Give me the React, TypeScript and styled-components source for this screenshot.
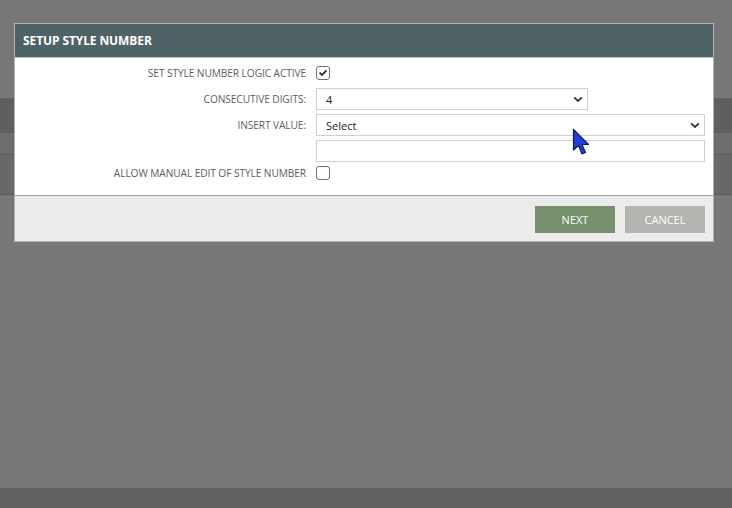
import styled, { createGlobalStyle } from 'styled-components';

const GlobalStyle = createGlobalStyle`
  * { box-sizing: border-box; }
  html, body { margin: 0; padding: 0; }
  body {
    width: 732px;
    height: 508px;
    overflow: hidden;
    font-family: 'Open Sans', 'Liberation Sans', sans-serif;
    background: #777777;
  }
`;

const rows = [
  { label: 'SET STYLE NUMBER LOGIC ACTIVE', kind: 'check', checked: true },
  { label: 'CONSECUTIVE DIGITS:', kind: 'select', value: '4', width: 272 },
  { label: 'INSERT VALUE:', kind: 'select', value: 'Select' },
  { label: '', kind: 'input' },
  { label: 'ALLOW MANUAL EDIT OF STYLE NUMBER', kind: 'check', checked: false },
];

const Chevron = () => (
  <svg width="10" height="7" viewBox="0 0 10 7">
    <path d="M1.2 1.4 L5 5 L8.8 1.4" fill="none" stroke="#333" strokeWidth="1.8" />
  </svg>
);

const Tick = () => (
  <svg width="10" height="8" viewBox="0 0 10 8">
    <path d="M1.5 3.6 L4 6 L8.6 1.4" fill="none" stroke="#333" strokeWidth="1.9" />
  </svg>
);

export default function App() {
  return (
    <>
      <GlobalStyle />
      <Page>
        <Band $h={98} $bg="#777777" />
        <Band $h={35} $bg="#5f5f5f" />
        <Band $h={22} $bg="#6d6d6d" $line />
        <Band $h={40} $bg="#686868" $line />
        <Band $h={293} $bg="#777777" />
        <Band $h={20} $bg="#616161" />

        <Dialog>
          <DialogHeader>SETUP STYLE NUMBER</DialogHeader>
          <DialogBody>
            {rows.map((r, i) => (
              <FormRow key={i} $first={i === 0}>
                <Label>{r.label}</Label>
                {r.kind === 'check' && <Check>{r.checked && <Tick />}</Check>}
                {r.kind === 'select' && (
                  <Select $width={r.width}>
                    <span>{r.value}</span>
                    <Chevron />
                  </Select>
                )}
                {r.kind === 'input' && <TextBox />}
              </FormRow>
            ))}
          </DialogBody>
          <DialogFooter>
            <Button $variant="primary">NEXT</Button>
            <Button $variant="muted">CANCEL</Button>
          </DialogFooter>
        </Dialog>

        <Cursor width="20" height="30" viewBox="0 0 20 30">
          <path
            d="M1.5 1.5 L1.5 22 L6.5 17.5 L10 26 L13.5 24.5 L10 16.5 L16.5 16.5 Z"
            fill="#1f3fd8"
            stroke="#0d1a70"
            strokeWidth="1.2"
            strokeLinejoin="round"
          />
        </Cursor>
      </Page>
    </>
  );
}

const Page = styled.div`
  position: relative;
  width: 732px;
  height: 508px;
  display: flex;
  flex-direction: column;
`;

const Band = styled.div<{ $h: number; $bg: string; $line?: boolean }>`
  height: ${(p) => p.$h}px;
  background: ${(p) => p.$bg};
  border-bottom: ${(p) => (p.$line ? '1px solid #5a5a5a' : 'none')};
`;

const Dialog = styled.div`
  position: absolute;
  left: 14px;
  top: 23px;
  width: 700px;
  border: 1px solid #a9b3b6;
  background: #ffffff;
  display: flex;
  flex-direction: column;
`;

const DialogHeader = styled.div`
  height: 34px;
  background: #4f6266;
  color: #ffffff;
  font-weight: 700;
  font-size: 12px;
  display: flex;
  align-items: center;
  padding-left: 8px;
  letter-spacing: -0.1px;
  border-bottom: 1px solid #b9c3c6;
`;

const DialogBody = styled.div`
  padding: 8px 8px 15px 0;
  display: flex;
  flex-direction: column;
  gap: 4px;
  border-bottom: 1px solid #9e9e9e;
`;

const FormRow = styled.div<{ $first?: boolean }>`
  display: grid;
  grid-template-columns: 291px 1fr;
  column-gap: 10px;
  align-items: center;
  min-height: 14px;
  margin-bottom: ${(p) => (p.$first ? '4px' : '0')};
`;

const Label = styled.div`
  text-align: right;
  font-size: 10.2px;
  color: #5e5e5e;
  letter-spacing: -0.1px;
  line-height: 14px;
`;

const Check = styled.div`
  width: 14px;
  height: 14px;
  border: 1px solid #6f6f6f;
  border-radius: 3px;
  display: flex;
  align-items: center;
  justify-content: center;
  background: #fff;
`;

const Select = styled.div<{ $width?: number }>`
  width: ${(p) => (p.$width ? `${p.$width}px` : '100%')};
  height: 22px;
  border: 1px solid #cfcfcf;
  display: flex;
  align-items: center;
  justify-content: space-between;
  padding: 0 4px 0 9px;
  font-size: 11px;
  color: #222;
`;

const TextBox = styled.div`
  height: 22px;
  border: 1px solid #cfcfcf;
`;

const DialogFooter = styled.div`
  height: 45px;
  background: #ebebeb;
  display: flex;
  justify-content: flex-end;
  align-items: center;
  gap: 10px;
  padding: 1px 8px 0 0;
`;

const Button = styled.div<{ $variant: 'primary' | 'muted' }>`
  width: 80px;
  height: 27px;
  display: flex;
  align-items: center;
  justify-content: center;
  color: #ffffff;
  font-size: 11px;
  background: ${(p) => (p.$variant === 'primary' ? '#76906c' : '#b4b4b1')};
`;

const Cursor = styled.svg`
  position: absolute;
  left: 572px;
  top: 128px;
`;
